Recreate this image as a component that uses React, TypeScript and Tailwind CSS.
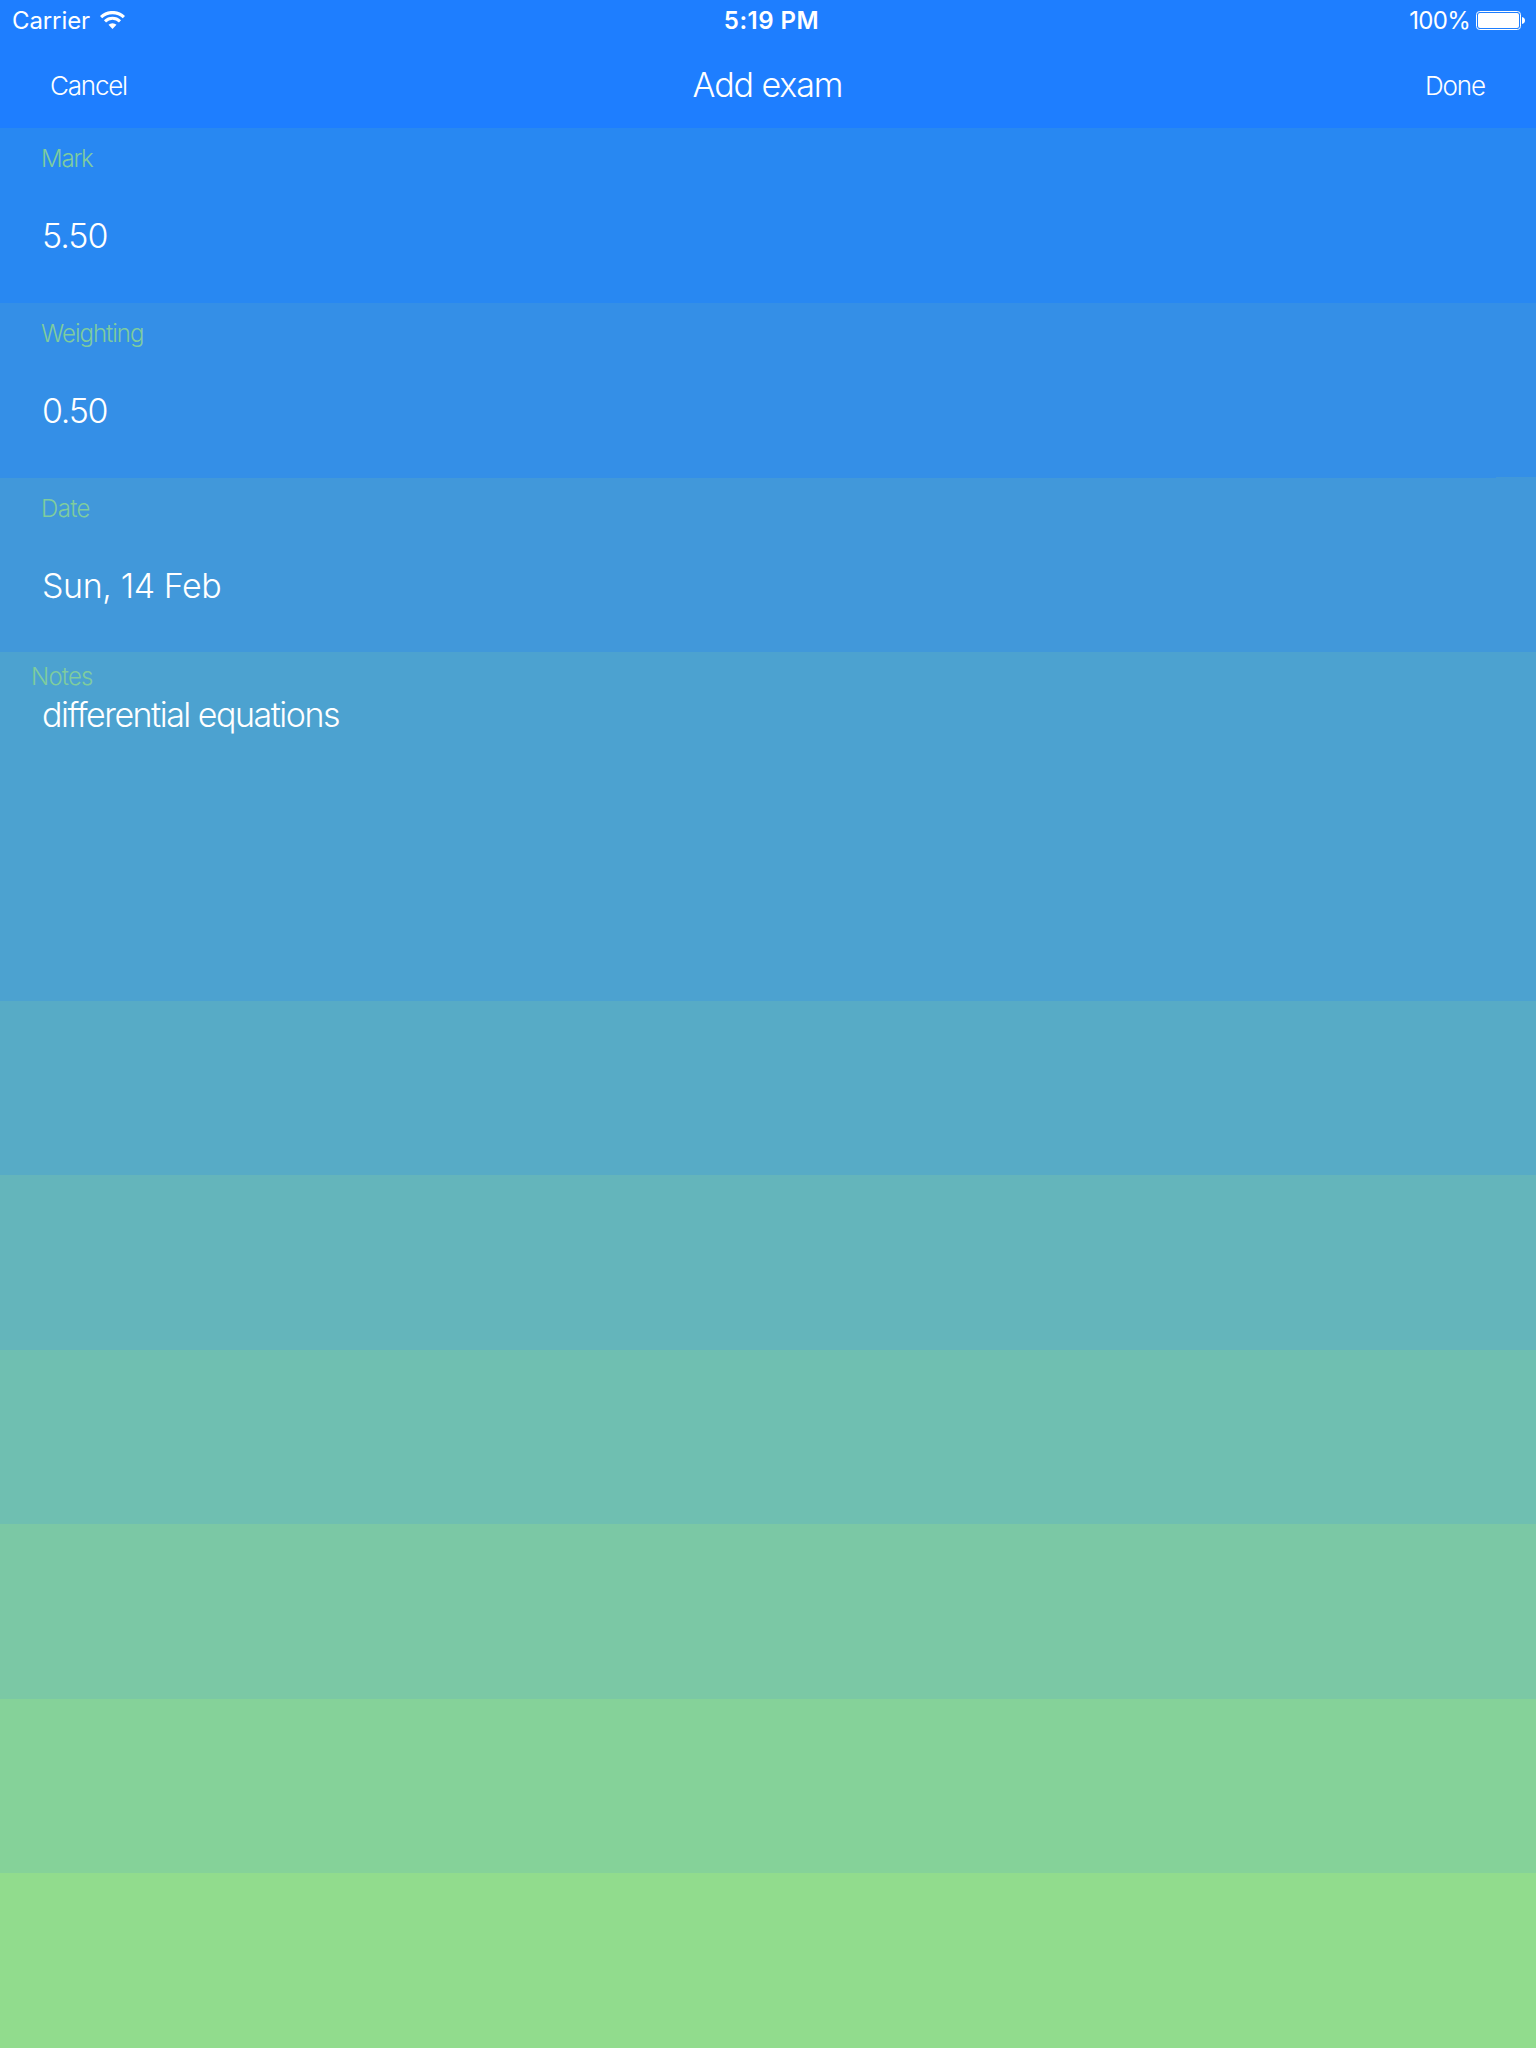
const fields = [
  { label: 'Mark', value: '5.50', row: 'h-[175px] bg-[#2888f2]', labelTracking: 'tracking-[-1.2px]', valueTracking: 'tracking-[-1px]' },
  { label: 'Weighting', value: '0.50', row: 'h-[175px] bg-[#348fe7]', labelTracking: 'tracking-[-1px]', valueTracking: 'tracking-[-1.3px]' },
  { label: 'Date', value: 'Sun, 14 Feb', row: 'relative h-[174px] bg-[#4198da]', labelTracking: 'tracking-[-0.6px]', valueTracking: 'tracking-[-0.4px]' },
];

const emptyRows = [
  'h-[174px] bg-[#57abc6]',
  'h-[175px] bg-[#64b5bb]',
  'h-[174px] bg-[#6fbfb1]',
  'h-[175px] bg-[#7bc8a5]',
  'h-[174px] bg-[#85d299]',
  'h-[175px] bg-[#91dc8d]',
];

function WifiIcon() {
  return (
    <svg className="ml-[10px] mt-[11px] h-[18px] w-[25px]" viewBox="0 0 25 18" fill="none" stroke="white">
      <path d="M1.1 6.1a16.5 16.5 0 0 1 22.8 0" strokeWidth="3.2" />
      <path d="M5 10.3a10.9 10.9 0 0 1 15 0" strokeWidth="3" />
      <path d="M12.5 18l-4-4.2a5.8 5.8 0 0 1 8 0z" fill="white" stroke="none" />
    </svg>
  );
}

function BatteryIcon() {
  return (
    <svg className="mt-[11px] h-[19px] w-[50px]" viewBox="0 0 50 19">
      <rect x="0.5" y="0.5" width="44" height="18" rx="3.2" fill="none" stroke="white" />
      <rect x="2" y="2" width="41" height="15" rx="2" fill="white" />
      <path d="M46 6c2 .3 3 1.600 3 3.500s-1 3.200-3 3.500z" fill="white" />
    </svg>
  );
}

export default function App() {
  return (
    <div className="h-[2048px] w-[1536px] overflow-hidden bg-[#1e7eff] font-['Inter',sans-serif] font-light text-white">
      <header className="h-32 bg-[#1e7eff]">
        <div className="grid h-10 grid-cols-3 whitespace-nowrap text-[24px] font-normal leading-[42px]">
          <div className="flex pl-3">
            <span className="tracking-[-0.1px]">Carrier</span>
            <WifiIcon />
          </div>
          <div className="pl-[7px] text-center font-semibold tracking-[0.5px]">5:19 PM</div>
          <div className="flex justify-end pr-[10px]">
            <span className="mr-[6px] tracking-[-0.7px]">100%</span>
            <BatteryIcon />
          </div>
        </div>
        <nav className="grid h-[88px] grid-cols-3 whitespace-nowrap pl-[50px] pr-[51px] text-[26px] leading-[91px]">
          <button className="text-left tracking-[-1.2px]">Cancel</button>
          <h1 className="text-center text-[34px] leading-[90px] tracking-[-1.1px]">Add exam</h1>
          <button className="text-right tracking-[-1.1px]">Done</button>
        </nav>
      </header>
      <main>
        {fields.map((f) => (
          <section key={f.label} className={`${f.row} whitespace-nowrap pl-[41px] pt-[14px]`}>
            {f.label === 'Date' && <span className="absolute -top-px right-0 h-px w-10 bg-[#4198da]" />}
            <div className={`h-9 text-[24px] leading-[34px] text-[#7fcc9e] ${f.labelTracking}`}>{f.label}</div>
            <div className={`mt-[32px] pl-px text-[34px] leading-[52px] ${f.valueTracking}`}>{f.value}</div>
          </section>
        ))}
        <section className="h-[349px] whitespace-nowrap bg-[#4ca2d0] pt-[8px]">
          <div className="pl-[31px] text-[24px] leading-[34px] tracking-[-0.8px] text-[#7fcc9e]">Notes</div>
          <div className="pl-[42px] text-[34px] leading-[42px] tracking-[-1.5px]">differential equations</div>
        </section>
        {emptyRows.map((row) => (
          <div key={row} className={row} />
        ))}
      </main>
    </div>
  );
}
